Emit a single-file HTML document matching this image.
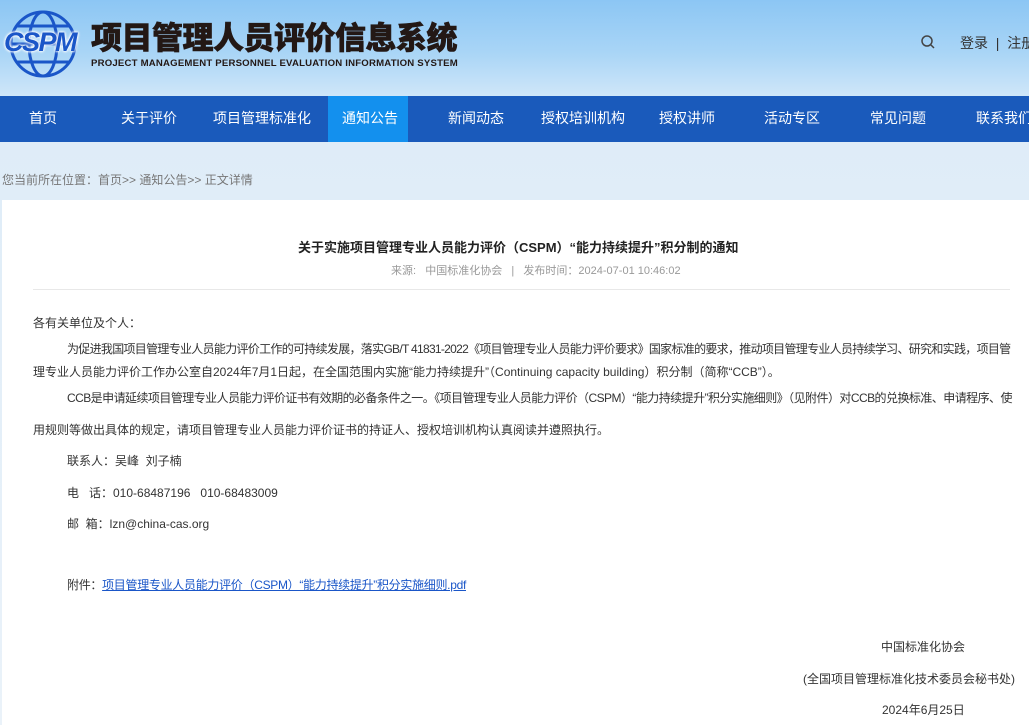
<!DOCTYPE html>
<html><head><meta charset="utf-8"><style>
*{margin:0;padding:0;box-sizing:border-box}
body{width:1029px;height:725px;overflow:hidden;font-family:"Liberation Sans","Noto Sans CJK SC",sans-serif;background:linear-gradient(180deg,#dcebf8 0%,#eaf2f9 100%);position:relative}
.hd{position:absolute;left:0;top:0;width:1029px;height:96px;background:linear-gradient(180deg,#8cc6f4 0%,#a9d5f6 55%,#cfe6f9 100%)}
.t1{position:absolute;left:91px;top:13px;font-size:31px;font-weight:900;color:#231815;letter-spacing:-0.5px;font-family:"Noto Sans CJK SC",sans-serif;-webkit-text-stroke:0.6px #231815}
.t2{position:absolute;left:91px;top:58px;font-size:9.6px;font-weight:bold;color:#231815;letter-spacing:0.2px;white-space:nowrap}
.nav{position:absolute;left:0;top:96px;width:1029px;height:46px;background:#1a5abb}
.nav span{position:absolute;top:0;line-height:44px;color:#fff;font-size:14px;white-space:nowrap}
.act{position:absolute;left:328px;top:0;width:80px;height:46px;background:#1390ee}
.crumb{position:absolute;left:2px;top:171px;font-size:12px;color:#777;white-space:nowrap}
.panel{position:absolute;left:2px;top:200px;width:1027px;height:525px;background:#fff}
.p{position:absolute;font-size:12px;color:#333;white-space:nowrap}
</style></head><body>
<div class="hd">
<svg width="80" height="80" viewBox="0 0 80 80" style="position:absolute;left:3px;top:4px">
<g fill="none" stroke="#1a56c8" stroke-width="3"><circle cx="40" cy="40" r="32"/><ellipse cx="40" cy="40" rx="14" ry="32"/><line x1="8" y1="40" x2="72" y2="40"/><path d="M14 22H66M14 58H66"/></g>
</svg>
<div style="position:absolute;left:4px;top:27px;font-size:27px;font-weight:bold;font-style:italic;color:#1a56c8;letter-spacing:-1.5px;text-shadow:0 0 3px #fff,0 0 3px #fff,0 0 2px #fff">CSPM</div>
<div class="t1">项目管理人员评价信息系统</div>
<div class="t2">PROJECT MANAGEMENT PERSONNEL EVALUATION INFORMATION SYSTEM</div>
<svg width="16" height="16" style="position:absolute;left:920px;top:34px"><circle cx="7" cy="7" r="5" fill="none" stroke="#444" stroke-width="1.5"/><line x1="11" y1="11" x2="14" y2="14" stroke="#444" stroke-width="1.5"/></svg>
<div style="position:absolute;left:960px;top:33px;font-size:14px;color:#333;white-space:nowrap">登录 &nbsp;| &nbsp;注册</div>
</div>
<div class="nav"><div class="act"></div>
<span style="left:29px">首页</span><span style="left:121px">关于评价</span><span style="left:213px">项目管理标准化</span><span style="left:342px">通知公告</span><span style="left:448px">新闻动态</span><span style="left:541px">授权培训机构</span><span style="left:659px">授权讲师</span><span style="left:764px">活动专区</span><span style="left:870px">常见问题</span><span style="left:976px">联系我们</span></div>
<div class="crumb">您当前所在位置：首页&gt;&gt; 通知公告&gt;&gt; 正文详情</div>
<div class="panel"></div>
<div class="p" style="left:298px;top:237px;font-size:13px;font-weight:bold;color:#222">关于实施项目管理专业人员能力评价（CSPM）“能力持续提升”积分制的通知</div>
<div class="p" style="left:391px;top:262px;font-size:11px;color:#999">来源: &nbsp;&nbsp;中国标准化协会 &nbsp;&nbsp;| &nbsp;&nbsp;发布时间：2024-07-01 10:46:02</div>
<div style="position:absolute;left:33px;top:289px;width:977px;height:1px;background:#e8e8e8"></div>
<div class="p" style="left:33px;top:314px">各有关单位及个人：</div>
<div class="p" style="left:67px;top:340px;letter-spacing:-0.7px">为促进我国项目管理专业人员能力评价工作的可持续发展，落实GB/T 41831-2022《项目管理专业人员能力评价要求》国家标准的要求，推动项目管理专业人员持续学习、研究和实践，项目管</div>
<div class="p" style="left:33px;top:363px">理专业人员能力评价工作办公室自2024年7月1日起，在全国范围内实施“能力持续提升”（Continuing capacity building）积分制（简称“CCB”）。</div>
<div class="p" style="left:67px;top:389px;letter-spacing:-0.55px">CCB是申请延续项目管理专业人员能力评价证书有效期的必备条件之一。《项目管理专业人员能力评价（CSPM）“能力持续提升”积分实施细则》（见附件）对CCB的兑换标准、申请程序、使</div>
<div class="p" style="left:33px;top:421px">用规则等做出具体的规定，请项目管理专业人员能力评价证书的持证人、授权培训机构认真阅读并遵照执行。</div>
<div class="p" style="left:67px;top:452px">联系人：吴峰 &nbsp;刘子楠</div>
<div class="p" style="left:67px;top:484px">电 &nbsp;&nbsp;话：010-68487196 &nbsp;&nbsp;010-68483009</div>
<div class="p" style="left:67px;top:515px">邮 &nbsp;箱：lzn@china-cas.org</div>
<div class="p" style="left:67px;top:576px;letter-spacing:-0.3px">附件：<span style="color:#1a56c8;text-decoration:underline">项目管理专业人员能力评价（CSPM）“能力持续提升”积分实施细则.pdf</span></div>
<div class="p" style="left:881px;top:638px">中国标准化协会</div>
<div class="p" style="left:803px;top:670px">(全国项目管理标准化技术委员会秘书处)</div>
<div class="p" style="left:882px;top:701px">2024年6月25日</div>
</body></html>
